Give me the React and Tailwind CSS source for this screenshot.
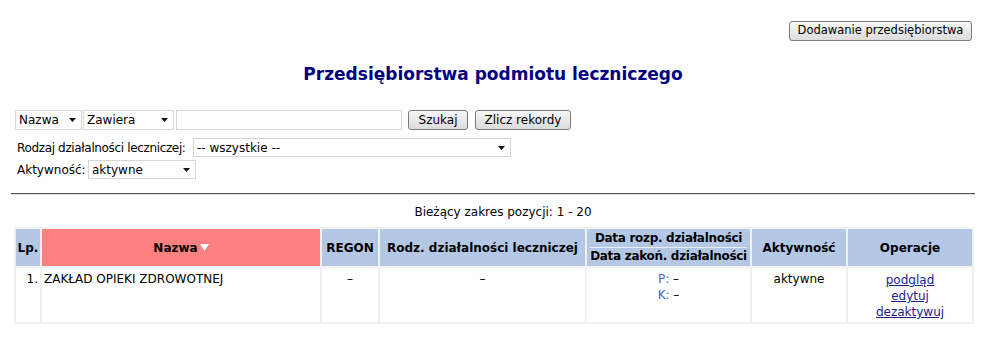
import React from 'react';

function FakeSelect({ value, width, height = 'h-[20px]' }) {
  return (
    <div
      className={`${width} ${height} flex items-center justify-between border border-[#d6d6d6] bg-white pl-[3px] pr-[5px] text-[12px] text-black`}
    >
      <span className="whitespace-nowrap">{value}</span>
      <svg width="7" height="4" viewBox="0 0 7 4">
        <path d="M0 0h7L3.5 4z" fill="#111" />
      </svg>
    </div>
  );
}

function Btn({ children, width }) {
  return (
    <button
      className={`${width} h-[20px] rounded-[3px] border border-[#7a7a7a] bg-gradient-to-b from-[#f7f7f7] to-[#dcdcdc] text-[12px] text-black leading-none whitespace-nowrap`}
    >
      {children}
    </button>
  );
}

export default function App() {
  const headCell = 'bg-[#b4c8e6] font-bold text-[12px] text-black h-[37px] p-0 text-center align-middle whitespace-nowrap';
  const bodyCell = 'bg-white align-top h-[54px] pt-[3px] text-[12px] leading-[16px] text-black';

  return (
    <div className="w-[986px] h-[345px] bg-white font-['DejaVu_Sans',Verdana,sans-serif] text-[12px] text-black pt-[21px] px-[14px]">
      {/* Add button */}
      <div className="flex justify-end">
        <button className="w-[183px] h-[20px] rounded-[3px] border border-[#7a7a7a] bg-gradient-to-b from-[#f7f7f7] to-[#dcdcdc] text-[11.5px] text-black leading-none whitespace-nowrap">
          Dodawanie przedsiębiorstwa
        </button>
      </div>

      {/* Title */}
      <h1 className="mt-[23px] h-[20px] text-center text-[17px] leading-[20px] font-bold text-[#000080]">
        Przedsiębiorstwa podmiotu leczniczego
      </h1>

      {/* Filters */}
      <div className="mt-[26px] flex items-center pl-[1px]">
        <FakeSelect value="Nazwa" width="w-[67px]" />
        <div className="ml-[1px]">
          <FakeSelect value="Zawiera" width="w-[91px]" />
        </div>
        <div className="ml-[2px] w-[226px] h-[20px] border border-[#d6d6d6] bg-white" />
        <div className="ml-[6px]">
          <Btn width="w-[60px]">Szukaj</Btn>
        </div>
        <div className="ml-[7px]">
          <Btn width="w-[96px]">Zlicz rekordy</Btn>
        </div>
      </div>

      <div className="mt-[8px] flex items-center pl-[3px]">
        <span className="w-[176px] whitespace-nowrap tracking-[-0.35px]">Rodzaj działalności leczniczej:</span>
        <FakeSelect value="-- wszystkie --" width="w-[318px]" height="h-[19px]" />
      </div>

      <div className="mt-[3px] flex items-center pl-[3px]">
        <span className="w-[71px] whitespace-nowrap">Aktywność:</span>
        <FakeSelect value="aktywne" width="w-[108px]" height="h-[19px]" />
      </div>

      {/* Divider */}
      <div className="mt-[14px] -ml-[3px] w-[964px] border-t border-[#555555] border-b border-b-[#dddddd]" />

      {/* Range */}
      <div className="mt-[10px] h-[14px] pl-[20px] text-center leading-[14px]">
        Bieżący zakres pozycji: 1 - 20
      </div>

      {/* Table */}
      <table className="mt-[8px] w-[960px] table-fixed border-separate border-spacing-[2px] bg-[#f1f1f1]">
        <thead>
          <tr>
            <th className={`${headCell} w-[24px]`}>Lp.</th>
            <th className="w-[278px] bg-[#ff8080] font-bold text-[12px] text-black h-[37px] p-0 text-center align-middle">
              Nazwa
              <svg className="inline-block ml-[2px] -mt-[2px]" width="9" height="7" viewBox="0 0 9 7">
                <path d="M0 0h9L4.5 7z" fill="#ffffff" />
              </svg>
            </th>
            <th className={`${headCell} w-[56px]`}>REGON</th>
            <th className={`${headCell} w-[205px]`}>Rodz. działalności leczniczej</th>
            <th className={`${headCell} w-[163px] tracking-[-0.3px]`}>
              <div className="mx-[3px] border-b border-[#e6eef9] leading-[17px]">Data rozp. działalności</div>
              <div className="leading-[17px]">Data zakoń. działalności</div>
            </th>
            <th className={`${headCell} w-[94px]`}>Aktywność</th>
            <th className={`${headCell} w-[124px]`}>Operacje</th>
          </tr>
        </thead>
        <tbody>
          <tr>
            <td className={`${bodyCell} text-right pr-[2px]`}>1.</td>
            <td className={`${bodyCell} pl-[2px]`}>ZAKŁAD OPIEKI ZDROWOTNEJ</td>
            <td className={`${bodyCell} text-center`}>–</td>
            <td className={`${bodyCell} text-center`}>–</td>
            <td className={`${bodyCell} text-center`}>
              <div>
                <span className="text-[#3a67c2]">P:</span> –
              </div>
              <div>
                <span className="text-[#3a67c2]">K:</span> –
              </div>
            </td>
            <td className={`${bodyCell} text-center`}>aktywne</td>
            <td className={`${bodyCell} text-center pt-[4px]`}>
              <div>
                <a href="#" className="text-[#1c1c8f] underline">podgląd</a>
              </div>
              <div>
                <a href="#" className="text-[#1c1c8f] underline">edytuj</a>
              </div>
              <div>
                <a href="#" className="text-[#1c1c8f] underline">dezaktywuj</a>
              </div>
            </td>
          </tr>
        </tbody>
      </table>
    </div>
  );
}
